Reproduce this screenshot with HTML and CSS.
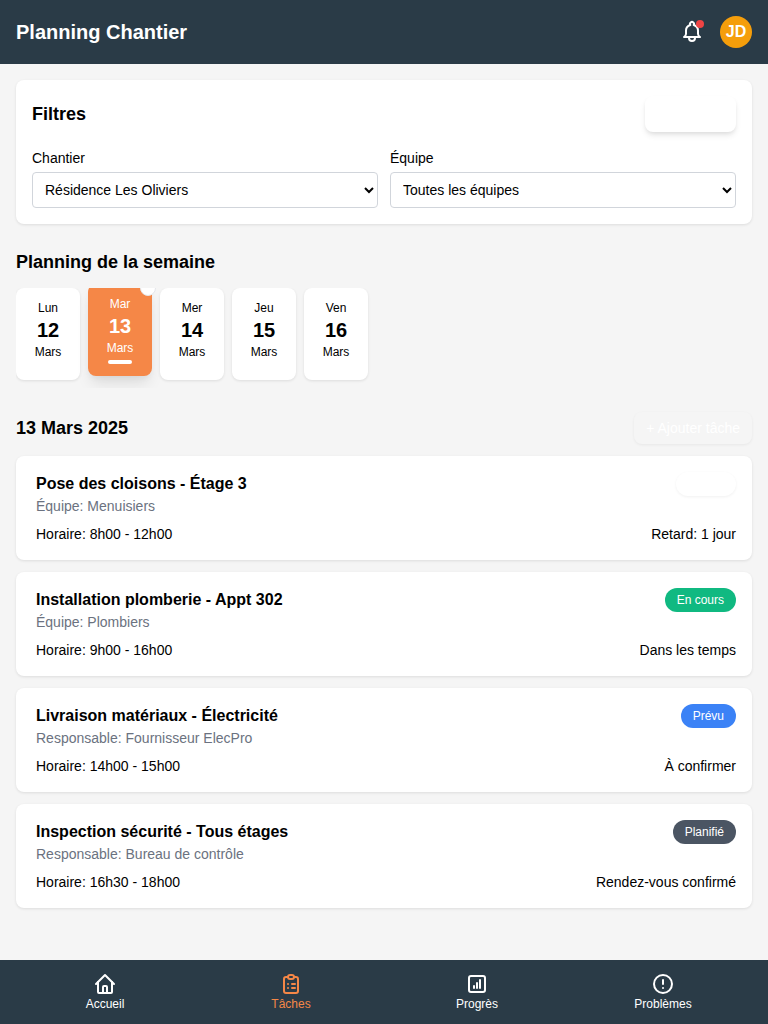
FILE: index.html
```html
<!DOCTYPE html>
<html lang="fr">
<head>
<meta charset="utf-8">
<title>Planning Chantier</title>
<link rel="stylesheet" href="styles.css">
</head>
<body>
<div class="app">
  <header class="topbar">
    <h1 class="brand">Planning Chantier</h1>
    <div class="top-actions">
      <span class="bell">
        <svg width="24" height="24" viewBox="0 0 24 24" fill="none" stroke="currentColor" stroke-width="2" stroke-linecap="round" stroke-linejoin="round"><path d="M10.300 5a2 2 0 1 1 3.400 0A6 6 0 0 1 18 11v3a4 4 0 0 0 2 3H4a4 4 0 0 0 2-3v-3a6 6 0 0 1 4.300-6"/><path d="M9 17v1a3 3 0 0 0 6 0v-1"/></svg>
        <span class="bell-dot"></span>
      </span>
      <span class="avatar">JD</span>
    </div>
  </header>

  <main class="content">
    <section class="card filters">
      <div class="filters-head">
        <h2 class="filters-title">Filtres</h2>
        <button class="ghost-btn" type="button"></button>
      </div>
      <div class="filters-grid">
        <label class="field">
          <span class="field-label">Chantier</span>
          <select class="select"><option>Résidence Les Oliviers</option></select>
        </label>
        <label class="field">
          <span class="field-label">Équipe</span>
          <select class="select"><option>Toutes les équipes</option></select>
        </label>
      </div>
    </section>

    <h2 class="section-title">Planning de la semaine</h2>
    <div class="days">
      <div class="day"><span class="day-name">Lun</span><span class="day-num">12</span><span class="day-month">Mars</span></div>
      <div class="day day-active"><span class="day-name">Mar</span><span class="day-num">13</span><span class="day-month">Mars</span><span class="day-bar"></span><span class="day-dot"></span></div>
      <div class="day"><span class="day-name">Mer</span><span class="day-num">14</span><span class="day-month">Mars</span></div>
      <div class="day"><span class="day-name">Jeu</span><span class="day-num">15</span><span class="day-month">Mars</span></div>
      <div class="day"><span class="day-name">Ven</span><span class="day-num">16</span><span class="day-month">Mars</span></div>
    </div>

    <div class="tasks-head">
      <h2 class="tasks-date">13 Mars 2025</h2>
      <button class="add-btn" type="button">+ Ajouter tâche</button>
    </div>

    <div class="tasks">
      <article class="task">
        <div class="task-top">
          <div>
            <h3 class="task-title">Pose des cloisons - Étage 3</h3>
            <p class="task-sub">Équipe: Menuisiers</p>
          </div>
          <span class="badge badge-blank"></span>
        </div>
        <div class="task-bottom"><span>Horaire: 8h00 - 12h00</span><span>Retard: 1 jour</span></div>
      </article>
      <article class="task">
        <div class="task-top">
          <div>
            <h3 class="task-title">Installation plomberie - Appt 302</h3>
            <p class="task-sub">Équipe: Plombiers</p>
          </div>
          <span class="badge badge-green">En cours</span>
        </div>
        <div class="task-bottom"><span>Horaire: 9h00 - 16h00</span><span>Dans les temps</span></div>
      </article>
      <article class="task">
        <div class="task-top">
          <div>
            <h3 class="task-title">Livraison matériaux - Électricité</h3>
            <p class="task-sub">Responsable: Fournisseur ElecPro</p>
          </div>
          <span class="badge badge-blue">Prévu</span>
        </div>
        <div class="task-bottom"><span>Horaire: 14h00 - 15h00</span><span>À confirmer</span></div>
      </article>
      <article class="task">
        <div class="task-top">
          <div>
            <h3 class="task-title">Inspection sécurité - Tous étages</h3>
            <p class="task-sub">Responsable: Bureau de contrôle</p>
          </div>
          <span class="badge badge-grey">Planifié</span>
        </div>
        <div class="task-bottom"><span>Horaire: 16h30 - 18h00</span><span>Rendez-vous confirmé</span></div>
      </article>
    </div>
  </main>

  <nav class="tabbar">
    <a class="tab">
      <svg width="24" height="24" viewBox="0 0 24 24" fill="none" stroke="currentColor" stroke-width="2" stroke-linecap="round" stroke-linejoin="round"><path d="M3 12l9-9 9 9"/><path d="M5 10v10a1 1 0 0 0 1 1h12a1 1 0 0 0 1-1V10"/><path d="M10 21v-6a1 1 0 0 1 1-1h2a1 1 0 0 1 1 1v6"/></svg>
      <span>Accueil</span>
    </a>
    <a class="tab tab-active">
      <svg width="24" height="24" viewBox="0 0 24 24" fill="none" stroke="currentColor" stroke-width="2" stroke-linecap="round" stroke-linejoin="round"><path d="M9 5H7a2 2 0 0 0-2 2v12a2 2 0 0 0 2 2h10a2 2 0 0 0 2-2V7a2 2 0 0 0-2-2h-2"/><rect x="9" y="3" width="6" height="4" rx="2"/><path d="M9 12h.01M13 12h3M9 16h.01M13 16h3"/></svg>
      <span>Tâches</span>
    </a>
    <a class="tab">
      <svg width="24" height="24" viewBox="0 0 24 24" fill="none" stroke="currentColor" stroke-width="2" stroke-linecap="round" stroke-linejoin="round"><rect x="4" y="4" width="16" height="16" rx="2"/><path d="M9 16v-2M12 16v-5M15 16V8"/></svg>
      <span>Progrès</span>
    </a>
    <a class="tab">
      <svg width="24" height="24" viewBox="0 0 24 24" fill="none" stroke="currentColor" stroke-width="2" stroke-linecap="round" stroke-linejoin="round"><circle cx="12" cy="12" r="9"/><path d="M12 8v4M12 16h.01"/></svg>
      <span>Problèmes</span>
    </a>
  </nav>
</div>
</body>
</html>
```

FILE: styles.css
```css
* { box-sizing: border-box; }
html, body { margin: 0; padding: 0; }
body {
  font-family: "Liberation Sans", Arial, sans-serif;
  background: #f5f5f5;
  color: #000;
}
h1, h2, h3, p { margin: 0; }
.app {
  width: 768px;
  height: 1024px;
  display: flex;
  flex-direction: column;
  overflow: hidden;
}
.topbar {
  height: 64px;
  flex: none;
  background: #2a3b47;
  color: #fff;
  display: flex;
  align-items: center;
  justify-content: space-between;
  padding: 0 16px;
}
.brand { font-size: 20px; font-weight: 700; }
.top-actions { display: flex; align-items: center; gap: 16px; }
.bell { position: relative; display: flex; width: 24px; height: 24px; }
.bell-dot {
  position: absolute;
  top: 0;
  right: 0;
  width: 8px;
  height: 8px;
  border-radius: 50%;
  background: #ef4444;
}
.avatar {
  width: 32px;
  height: 32px;
  border-radius: 50%;
  background: #f59e0b;
  color: #fff;
  font-weight: 700;
  font-size: 16px;
  display: flex;
  align-items: center;
  justify-content: center;
}
.content {
  flex: 1;
  min-height: 0;
  padding: 16px;
}
.card {
  background: #fff;
  border-radius: 8px;
  box-shadow: 0 1px 3px rgba(0,0,0,.1);
}
.filters { padding: 16px; }
.filters-head {
  display: flex;
  align-items: center;
  justify-content: space-between;
  margin-bottom: 16px;
}
.filters-title { font-size: 18px; font-weight: 700; }
.ghost-btn {
  width: 91px;
  height: 36px;
  border: 0;
  border-radius: 8px;
  background: #fff;
  box-shadow: 0 4px 6px -1px rgba(0,0,0,.1), 0 2px 4px -1px rgba(0,0,0,.06);
}
.filters-grid {
  display: grid;
  grid-template-columns: 1fr 1fr;
  gap: 12px;
}
.field { display: block; }
.field-label {
  display: block;
  font-size: 14px;
  line-height: 20px;
  margin-bottom: 4px;
}
.select {
  display: block;
  width: 100%;
  height: 36px;
  padding: 8px;
  font-family: inherit;
  font-size: 14px;
  color: #000;
  background: #fff;
  border: 1px solid #d1d5db;
  border-radius: 4px;
}
.section-title {
  font-size: 18px;
  font-weight: 700;
  line-height: 22px;
  margin: 27px 0 15px;
}
.days {
  display: flex;
  gap: 8px;
  overflow: hidden;
  height: 100px;
}
.day {
  position: relative;
  flex: none;
  width: 64px;
  height: 92px;
  padding-top: 12px;
  background: #fff;
  border-radius: 8px;
  box-shadow: 0 1px 3px rgba(0,0,0,.1);
  display: flex;
  flex-direction: column;
  align-items: center;
}
.day-name { font-size: 12px; line-height: 16px; }
.day-num { font-size: 20px; font-weight: 700; line-height: 28px; }
.day-month { font-size: 12px; line-height: 16px; }
.day-active {
  background: #f58747;
  color: #fff;
  transform: translateY(-4px);
  box-shadow: 0 10px 15px -3px rgba(0,0,0,.1), 0 4px 6px -2px rgba(0,0,0,.05);
}
.day-bar {
  position: absolute;
  left: 20px;
  bottom: 12px;
  width: 24px;
  height: 4px;
  border-radius: 2px;
  background: #fff;
}
.day-dot {
  position: absolute;
  top: -4px;
  right: -4px;
  width: 16px;
  height: 16px;
  border-radius: 50%;
  background: #fff;
  border: 1px solid #e5e7eb;
}
.tasks-head {
  display: flex;
  align-items: center;
  justify-content: space-between;
  margin-top: 24px;
  margin-bottom: 12px;
}
.tasks-date { font-size: 18px; font-weight: 700; }
.add-btn {
  height: 32px;
  padding: 0 12px;
  border: 0;
  border-radius: 8px;
  background: #f5f5f5;
  color: #fff;
  font-family: inherit;
  font-size: 14px;
  box-shadow: 0 1px 3px rgba(0,0,0,.06);
}
.tasks { display: flex; flex-direction: column; gap: 12px; }
.task {
  height: 104px;
  background: #fff;
  border-radius: 8px;
  box-shadow: 0 1px 3px rgba(0,0,0,.1);
  padding: 16px 16px 16px 20px;
}
.task-top { display: flex; justify-content: space-between; align-items: flex-start; }
.task-title { font-size: 16px; font-weight: 700; line-height: 24px; }
.task-sub { font-size: 14px; line-height: 20px; color: #6b7280; }
.task-bottom {
  display: flex;
  justify-content: space-between;
  font-size: 14px;
  line-height: 20px;
  margin-top: 8px;
}
.badge {
  height: 24px;
  padding: 0 12px;
  border-radius: 12px;
  color: #fff;
  font-size: 12px;
  font-weight: 500;
  line-height: 24px;
}
.badge-blank { width: 60px; background: #fff; box-shadow: 0 1px 3px rgba(0,0,0,.06); }
.badge-green { background: #10b981; }
.badge-blue { background: #3b82f6; }
.badge-grey { background: #4b5563; }
.tabbar {
  height: 64px;
  flex: none;
  background: #2a3b47;
  color: #fff;
  display: grid;
  grid-template-columns: repeat(4, 1fr);
  padding: 0 12px;
}
.tab {
  display: flex;
  flex-direction: column;
  align-items: center;
  justify-content: center;
  font-size: 12px;
  font-weight: 500;
  line-height: 16px;
}
.tab-active { color: #f58747; }
```
